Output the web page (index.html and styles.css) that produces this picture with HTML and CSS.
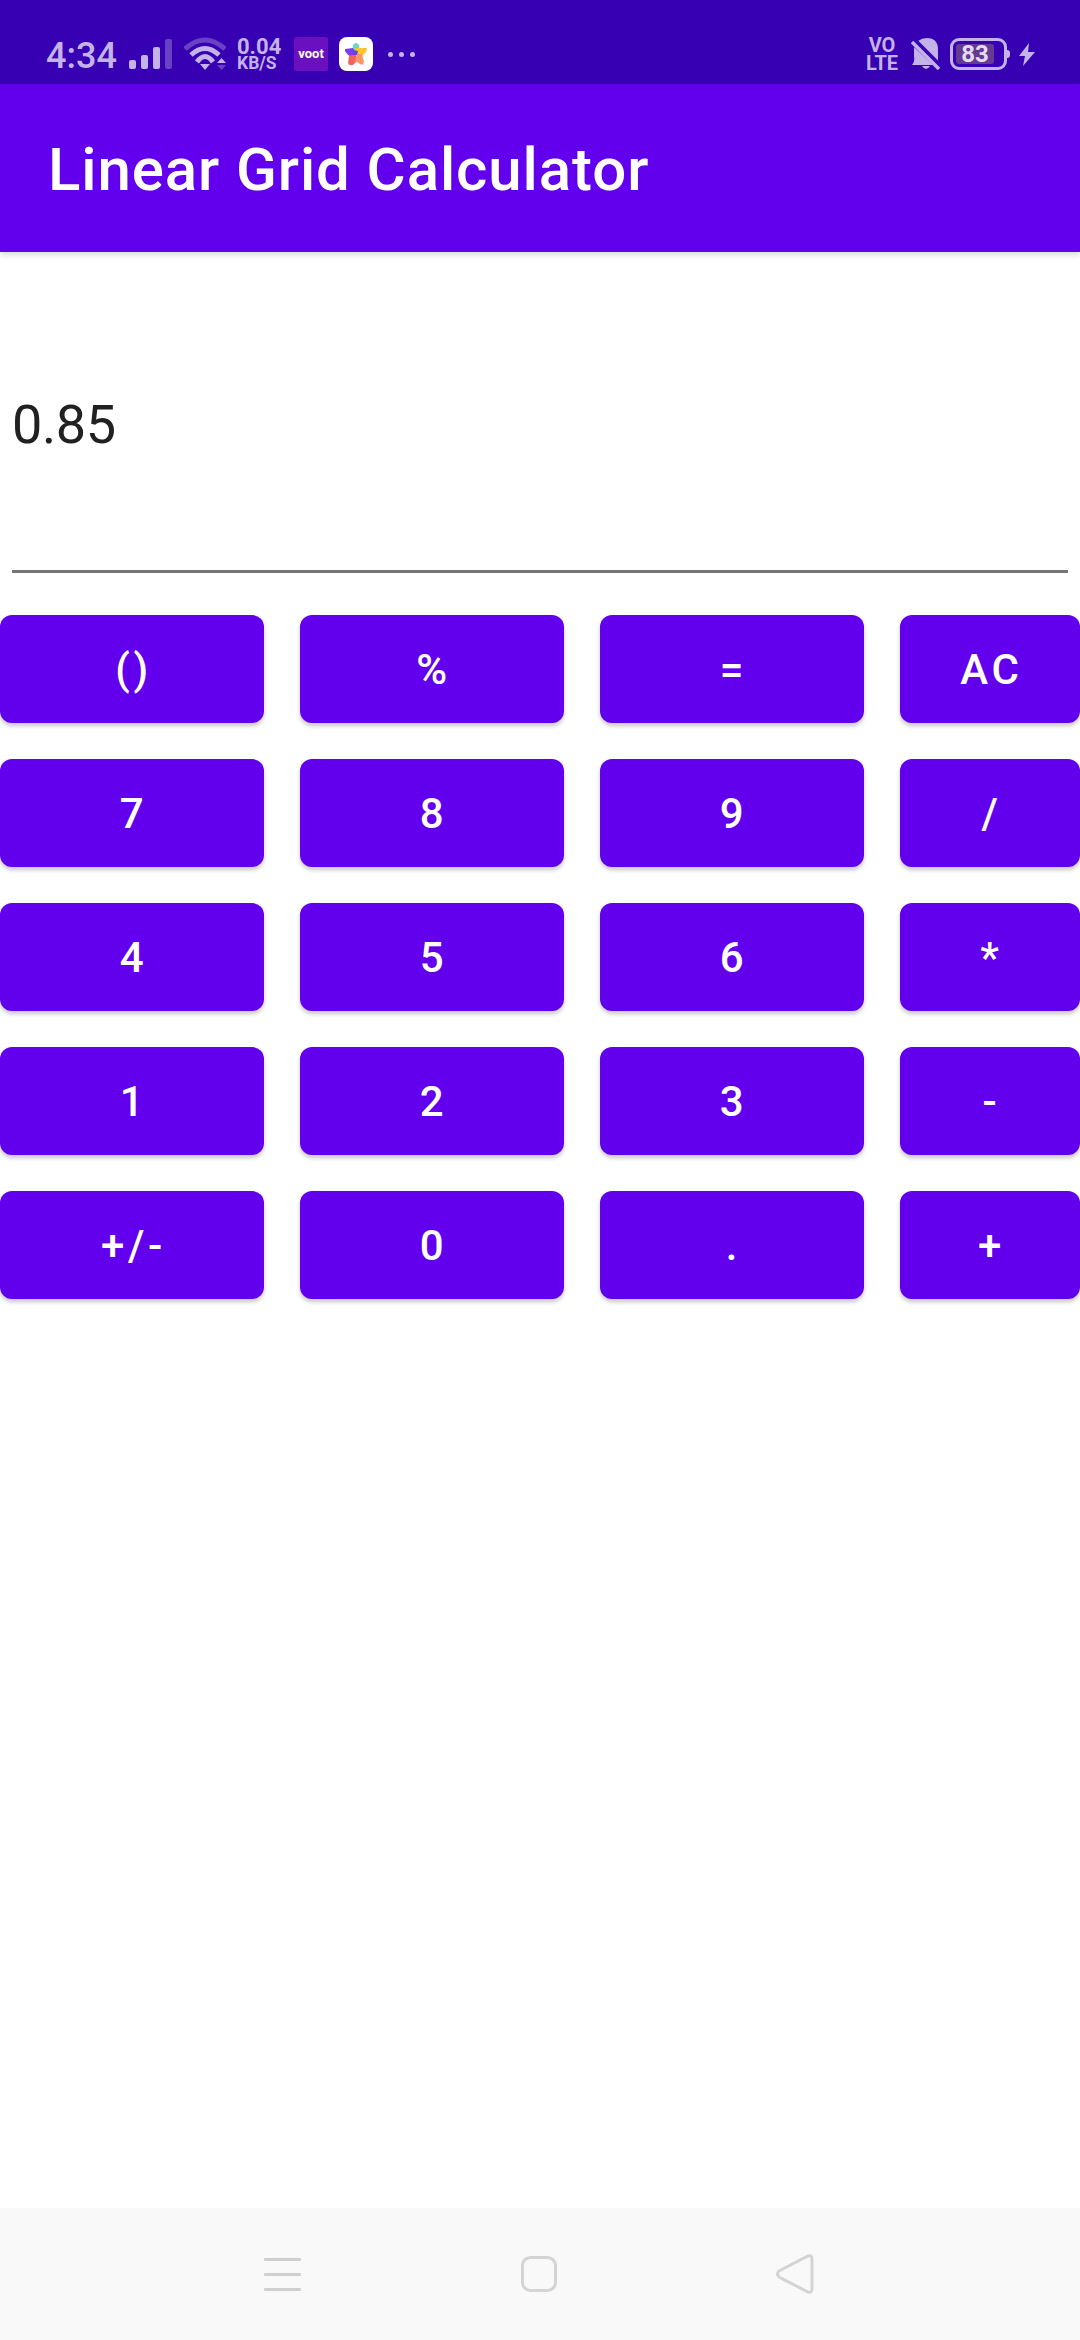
FILE: index.html
```html
<!DOCTYPE html>
<html lang="en">
<head>
    <meta charset="UTF-8">
    <meta name="viewport" content="width=device-width, initial-scale=1.0">
    <title>Linear Grid Calculator</title>
    <link rel="stylesheet" href="styles.css">
</head>
<body>
    <div class="screen">
        <div class="status-bar">
            <span class="time">4:34</span>
            <svg class="signal" width="43" height="30" viewBox="0 0 43 30">
                <rect x="0" y="21" width="7" height="9" rx="2" fill="#c4b3e8"/>
                <rect x="12" y="16" width="7" height="14" rx="2" fill="#c4b3e8"/>
                <rect x="24" y="8" width="7" height="22" rx="2" fill="#c4b3e8"/>
                <rect x="36" y="0" width="7" height="30" rx="2" fill="#6a41c4"/>
            </svg>
            <svg class="wifi" width="42" height="34" viewBox="0 0 42 34">
                <path d="M1 12 Q21 -6 41 12" fill="none" stroke="#6a41c4" stroke-width="5"/>
                <path d="M7 18 Q21 5 35 18" fill="none" stroke="#c4b3e8" stroke-width="5"/>
                <path d="M13 25 Q21 14 29 25" fill="none" stroke="#c4b3e8" stroke-width="5"/>
                <path d="M16 27 L26 27 L21 33 Z" fill="#c4b3e8"/>
                <path d="M33 26 L42 26 L37.5 21 Z" fill="#c4b3e8"/>
                <path d="M33 28 L42 28 L37.5 33 Z" fill="#6a41c4"/>
            </svg>
            <div class="speed">
                <span class="speed-value">0.04</span>
                <span class="speed-unit">KB/S</span>
            </div>
            <div class="voot">voot</div>
            <div class="star-app">
                <svg width="24" height="24" viewBox="0 0 24 24">
                    <path d="M9 3 Q12 -1 15 3 L16 11 L8 11 Z" fill="#6ed6c8"/>
                    <path d="M1 7 L9 6 L12 12 L8 15 Q4 14 1 9 Z" fill="#7a3ff0"/>
                    <path d="M11 6 L23 6 L22 10 L18 14 L13 12 Z" fill="#fdc52c"/>
                    <path d="M5 14 L12 12 L13 19 L9 23 Q5 24 4 21 Z" fill="#f0645a"/>
                    <path d="M13 12 L18 12 L20 20 Q19 24 16 22 L11 19 Z" fill="#fb9466"/>
                    <path d="M9 8 L14 9 L13 13 L9 13 Z" fill="#5e49d6"/>
                </svg>
            </div>
            <div class="dots"><i></i><i></i><i></i></div>

            <div class="status-right">
                <div class="volte"><span>VO</span><span>LTE</span></div>
                <svg class="bell" width="30" height="32" viewBox="0 0 30 32">
                    <path d="M7 3 Q11 0 16 0 Q27 0 27 12 L27 25 Z" fill="#c4b3e8"/>
                    <path d="M3 9 L22 27 L1 27 Q4 24 3 18 Z" fill="#c4b3e8"/>
                    <path d="M11 28 L19 28 Q15 34 11 28 Z" fill="#c4b3e8"/>
                    <path d="M3 2 L29 28" stroke="#3700b3" stroke-width="5"/>
                    <path d="M1 4 L28 31" stroke="#c4b3e8" stroke-width="3.5"/>
                </svg>
                <div class="battery">
                    <div class="battery-body"><span class="battery-level">83</span></div>
                    <div class="battery-nub"></div>
                </div>
                <svg class="bolt" width="16" height="23" viewBox="0 0 16 23">
                    <path d="M10 0 L0 13 L6 13 L4 23 L16 9 L9 9 Z" fill="#c4b3e8"/>
                </svg>
            </div>
        </div>

        <header class="app-bar">
            <h1>Linear Grid Calculator</h1>
        </header>

        <div class="display">0.85</div>

        <div class="keys">
            <button>()</button>
            <button>%</button>
            <button>=</button>
            <button>AC</button>
            <button>7</button>
            <button>8</button>
            <button>9</button>
            <button>/</button>
            <button>4</button>
            <button>5</button>
            <button>6</button>
            <button>*</button>
            <button>1</button>
            <button>2</button>
            <button>3</button>
            <button>-</button>
            <button>+/-</button>
            <button>0</button>
            <button>.</button>
            <button>+</button>
        </div>

        <div class="nav-bar">
            <svg width="37" height="33" viewBox="0 0 37 33">
                <rect x="0" y="0" width="37" height="3" rx="1" fill="#cfcfcf"/>
                <rect x="0" y="15" width="37" height="3" rx="1" fill="#cfcfcf"/>
                <rect x="0" y="30" width="37" height="3" rx="1" fill="#cfcfcf"/>
            </svg>
            <svg width="36" height="36" viewBox="0 0 36 36">
                <rect x="1.5" y="1.5" width="33" height="33" rx="8" fill="none" stroke="#d4d4d4" stroke-width="3"/>
            </svg>
            <svg width="38" height="40" viewBox="0 0 38 40">
                <path d="M3 17 L32 2 Q36 1 36 5 L36 35 Q36 39 32 38 L3 23 Q0 20 3 17 Z" fill="none" stroke="#d4d4d4" stroke-width="3"/>
            </svg>
        </div>
    </div>
</body>
</html>
```

FILE: styles.css
```css
body {
    margin: 0;
    padding: 0;
    font-family: Roboto, sans-serif;
    background-color: #fff;
}

.screen {
    width: 1080px;
    height: 2340px;
    display: flex;
    flex-direction: column;
    overflow: hidden;
}

/* status bar */
.status-bar {
    height: 60px;
    padding: 24px 45px 0 46px;
    background-color: #3700b3;
    display: flex;
    align-items: center;
    color: #c4b3e8;
    font-weight: 500;
}

.time {
    font-size: 36px;
    line-height: 36px;
    width: 83px;
    margin-top: 4px;
}

.signal {
    margin-right: 12px;
}

.wifi {
    margin-right: 11px;
}

.speed {
    display: flex;
    flex-direction: column;
    width: 57px;
    font-weight: 700;
}

.speed-value {
    font-size: 22px;
    line-height: 19px;
}

.speed-unit {
    font-size: 17.5px;
    line-height: 15px;
}

.voot {
    width: 34px;
    height: 34px;
    background-color: #6a10c0;
    border-radius: 2px;
    color: #fff;
    font-size: 13px;
    font-weight: 700;
    line-height: 34px;
    text-align: center;
    margin-right: 11px;
}

.star-app {
    width: 34px;
    height: 34px;
    background-color: #fff;
    border-radius: 8px;
    display: flex;
    align-items: center;
    justify-content: center;
    margin-right: 15px;
}

.dots {
    display: flex;
    gap: 6px;
}

.dots i {
    width: 5px;
    height: 5px;
    border-radius: 50%;
    background-color: #c4b3e8;
}

.status-right {
    margin-left: auto;
    display: flex;
    align-items: center;
}

.volte {
    display: flex;
    flex-direction: column;
    align-items: center;
    font-size: 20px;
    font-weight: 700;
    line-height: 18px;
    width: 34px;
    margin-right: 12px;
}

.bell {
    margin-right: 9px;
}

.battery {
    display: flex;
    align-items: center;
    margin-right: 9px;
}

.battery-body {
    width: 45px;
    height: 20px;
    padding: 3px;
    border: 3px solid #c4b3e8;
    border-radius: 9px;
    display: flex;
}

.battery-level {
    width: 38px;
    background-color: #653a93;
    border-radius: 3px;
    color: #e4dbf0;
    font-size: 24px;
    font-weight: 700;
    line-height: 21px;
    text-align: center;
}

.battery-nub {
    width: 3px;
    height: 8px;
    background-color: #c4b3e8;
    border-radius: 0 3px 3px 0;
}

/* app bar */
.app-bar {
    height: 166px;
    padding: 2px 0 0 48px;
    background-color: #6200ee;
    display: flex;
    align-items: center;
    box-shadow: 0 3px 6px rgba(0, 0, 0, 0.14);
}

.app-bar h1 {
    margin: 0;
    color: #fff;
    font-size: 60px;
    font-weight: 500;
    letter-spacing: 0.9px;
}

/* calculator */
.display {
    height: 177px;
    margin: 0 12px;
    padding-top: 141px;
    border-bottom: 3px solid #757575;
    color: #212121;
    font-size: 54px;
    line-height: 64px;
    letter-spacing: -0.4px;
}

.keys {
    display: grid;
    grid-template-columns: 264px 264px 264px 180px;
    grid-auto-rows: 108px;
    gap: 36px;
    margin-top: 42px;
}

.keys button {
    padding: 0 0 0 3px;
    border: none;
    border-radius: 12px;
    background-color: #6200ee;
    box-shadow: 0 3px 4px rgba(0, 0, 0, 0.22);
    color: #fff;
    font-family: Roboto, sans-serif;
    font-size: 42px;
    font-weight: 500;
    letter-spacing: 0.0892857em;
}

/* bottom navigation */
.nav-bar {
    margin-top: auto;
    height: 132px;
    padding: 0 266px 0 264px;
    box-sizing: border-box;
    background-color: #f9f9f9;
    display: flex;
    align-items: center;
    justify-content: space-between;
}
```
